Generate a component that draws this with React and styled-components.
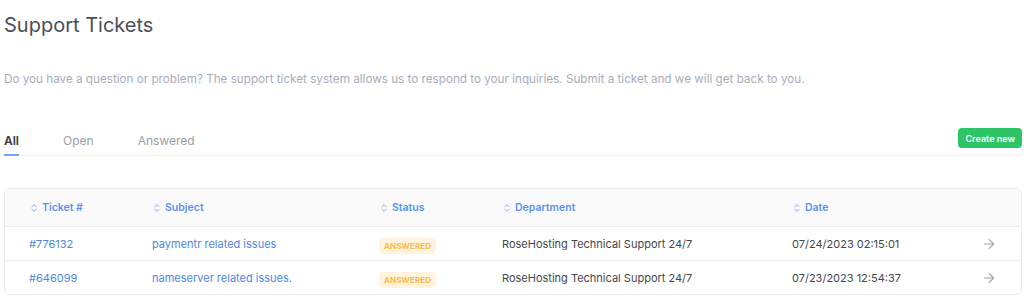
import React from "react";
import styled, { createGlobalStyle } from "styled-components";
import { ChevronsUpDown, ArrowRight } from "lucide-react";

const GlobalStyle = createGlobalStyle`
  body {
    margin: 0;
    background: #ffffff;
    font-family: "Inter", "Open Sans", sans-serif;
  }
`;

const tickets = [
  {
    id: "#776132",
    subject: "paymentr related issues",
    status: "ANSWERED",
    department: "RoseHosting Technical Support 24/7",
    date: "07/24/2023 02:15:01",
  },
  {
    id: "#646099",
    subject: "nameserver related issues.",
    status: "ANSWERED",
    department: "RoseHosting Technical Support 24/7",
    date: "07/23/2023 12:54:37",
  },
];

const columns = ["Ticket #", "Subject", "Status", "Department", "Date"];

const App = () => {
  return (
    <Page>
      <GlobalStyle />
      <Title>Support Tickets</Title>
      <Intro>
        Do you have a question or problem? The support ticket system allows us to respond to your
        inquiries. Submit a ticket and we will get back to you.
      </Intro>
      <TabBar>
        <Tabs>
          <Tab active>All</Tab>
          <Tab>Open</Tab>
          <Tab>Answered</Tab>
        </Tabs>
        <CreateButton>Create new</CreateButton>
      </TabBar>
      <Card>
        <HeadRow>
          {columns.map((c) => (
            <HeadCell key={c}>
              <ChevronsUpDown size={10} strokeWidth={2.2} />
              {c}
            </HeadCell>
          ))}
          <span />
        </HeadRow>
        {tickets.map((t) => (
          <Row key={t.id}>
            <LinkCell>{t.id}</LinkCell>
            <LinkCell>{t.subject}</LinkCell>
            <div>
              <Badge>{t.status}</Badge>
            </div>
            <TextCell>{t.department}</TextCell>
            <TextCell>{t.date}</TextCell>
            <ArrowCell>
              <ArrowRight size={16} strokeWidth={1.6} />
            </ArrowCell>
          </Row>
        ))}
      </Card>
    </Page>
  );
};

export default App;

const Page = styled.div`
  padding: 0 2px 0 4px;
  width: 1018px;
`;

const Title = styled.h1`
  margin: 0;
  padding-top: 12px;
  font-size: 20px;
  font-weight: 400;
  line-height: 26px;
  color: #4b4f56;
`;

const Intro = styled.p`
  margin: 33px 0 0;
  font-size: 11.7px;
  line-height: 16px;
  color: #a8adbb;
  white-space: nowrap;
`;

const TabBar = styled.div`
  margin-top: 41px;
  display: flex;
  justify-content: space-between;
  align-items: center;
  border-bottom: 1px solid #eeeeee;
`;

const Tabs = styled.div`
  display: flex;
  gap: 44px;
`;

const Tab = styled.div`
  font-size: 12px;
  line-height: 16px;
  padding: 5px 0 5px;
  color: ${(p) => (p.active ? "#33363b" : "#9a9ea6")};
  font-weight: ${(p) => (p.active ? 600 : 400)};
  border-bottom: 2px solid ${(p) => (p.active ? "#6ea8f5" : "transparent")};
  margin-bottom: -1px;
`;

const CreateButton = styled.button`
  margin-bottom: 7px;
  height: 20px;
  padding: 0 7px;
  border: none;
  border-radius: 4px;
  background: #2ec567;
  color: #ffffff;
  font-family: inherit;
  font-size: 9px;
  font-weight: 600;
`;

const Card = styled.div`
  margin-top: 32px;
  border: 1px solid #ececec;
  border-radius: 6px;
  overflow: hidden;
`;

const grid = `
  display: grid;
  grid-template-columns: 123px 227px 123px 290px 1fr 40px;
  align-items: center;
  padding: 0 24px;
`;

const HeadRow = styled.div`
  ${grid}
  height: 37px;
  background: #fafafa;
  border-bottom: 1px solid #ececec;
`;

const HeadCell = styled.div`
  display: flex;
  align-items: center;
  gap: 3px;
  font-size: 10.5px;
  font-weight: 600;
  color: #5a92f0;
  svg {
    color: #7aa6f2;
  }
`;

const Row = styled.div`
  ${grid}
  height: 33px;
  & + & {
    border-top: 1px solid #ececec;
  }
`;

const LinkCell = styled.div`
  font-size: 11px;
  color: #4f86e6;
`;

const TextCell = styled.div`
  font-size: 11px;
  color: #44474d;
`;

const Badge = styled.span`
  display: inline-block;
  padding: 3px 5px;
  border-radius: 5px;
  background: #fff3dd;
  color: #f6bd4e;
  font-size: 8px;
  font-weight: 700;
  letter-spacing: 0.1px;
`;

const ArrowCell = styled.div`
  display: flex;
  justify-content: flex-end;
  color: #9ba1ab;
`;
